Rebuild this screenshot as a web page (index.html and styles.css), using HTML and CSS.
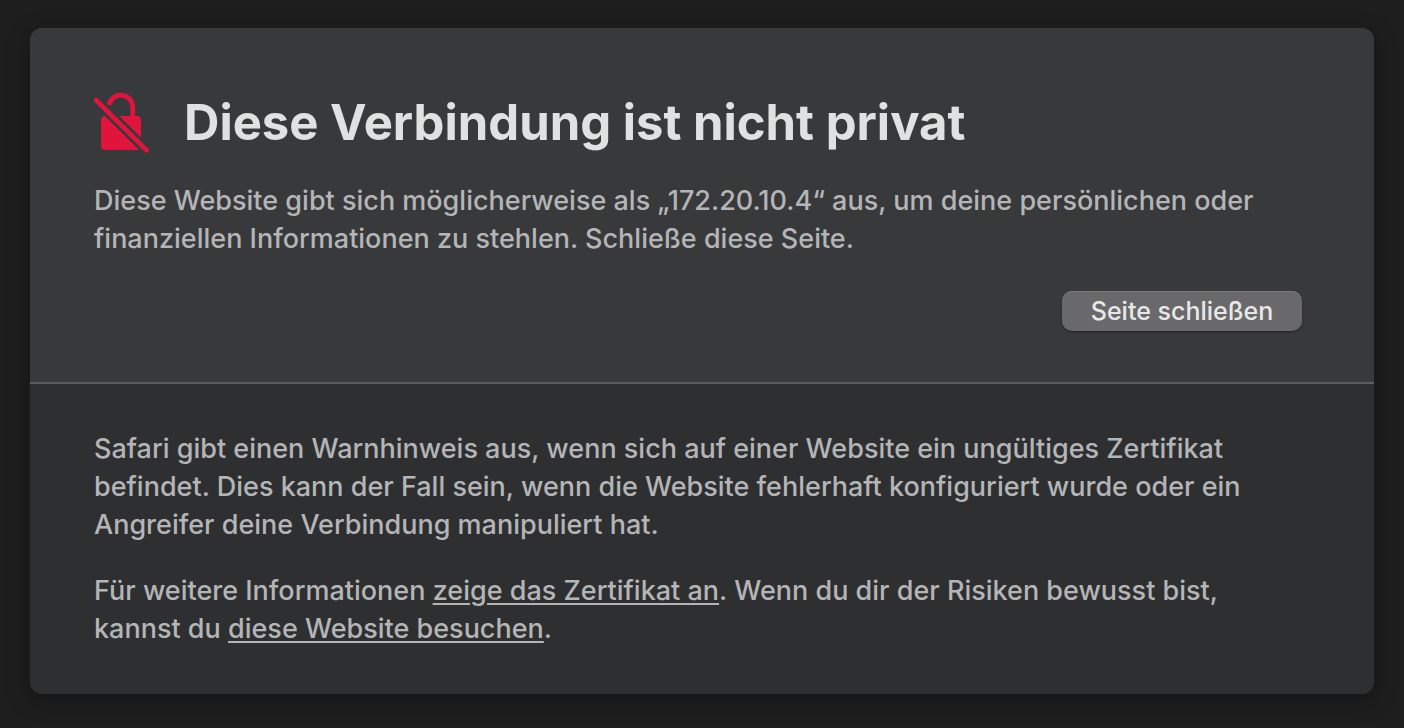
FILE: index.html
```html
<!DOCTYPE html>
<html lang="de">
<head>
<meta charset="utf-8">
<meta name="viewport" content="width=device-width, initial-scale=1">
<title>Diese Verbindung ist nicht privat</title>
<link rel="stylesheet" href="styles.css">
</head>
<body>
<main class="card">
  <section class="warning">
    <header class="heading">
      <svg class="lock" viewBox="0 0 56 62" aria-hidden="true">
        <path class="shackle" d="M14.8 25V15.5a12 12.4 0 0 1 24 0V25"/>
        <rect class="lock-body" x="7" y="24" width="40" height="34" rx="4"/>
        <path class="shackle-cut" d="M11 13H18V24H11Z"/>
        <path class="slash-gap" d="M2 8L57 62.6"/>
        <path class="slash" d="M2 8L52.7 58.3"/>
      </svg>
      <h1>Diese Verbindung ist nicht privat</h1>
    </header>
    <p>Diese Website gibt sich möglicherweise als „172.20.10.4“ aus, um deine persönlichen oder finanziellen Informationen zu stehlen. Schließe diese Seite.</p>
    <div class="actions"><button type="button">Seite schließen</button></div>
  </section>
  <section class="details">
    <p>Safari gibt einen Warnhinweis aus, wenn sich auf einer Website ein ungültiges Zertifikat befindet. Dies kann der Fall sein, wenn die Website fehlerhaft konfiguriert wurde oder ein Angreifer deine Verbindung manipuliert hat.</p>
    <p>Für weitere Informationen <a href="#">zeige das Zertifikat an</a>. Wenn du dir der Risiken bewusst bist, kannst du <a href="#">diese Website besuchen</a>.</p>
  </section>
</main>
</body>
</html>
```
FILE: styles.css
```css
* { box-sizing: border-box; }
body {
  margin: 0;
  padding: 28px 30px 34px;
  background: #1e1e1e;
  color: #b4b5b7;
  font: 500 27px/38px Inter, "Noto Sans", sans-serif;
}
.card {
  overflow: hidden;
  border-radius: 12px;
  background: #2e2f31;
  box-shadow: 0 6px 24px rgba(0, 0, 0, 0.3);
}
.warning {
  padding: 61px 72px 51px 64px;
  background: #38393b;
  border-bottom: 2px solid #5c5d5f;
}
.heading { display: flex; align-items: center; gap: 34px; margin-bottom: 25px; }
.lock { width: 56px; height: 62px; flex: none; }
.shackle { fill: none; stroke: #e0143c; stroke-width: 4.8; }
.lock-body { fill: #e0143c; }
.slash-gap { stroke: #38393b; stroke-width: 10; }
.shackle-cut { fill: #38393b; }
.slash { stroke: #e0143c; stroke-width: 4.6; stroke-linecap: round; }
h1 { margin: 0; color: #e0e1e1; font-size: 49px; line-height: 68px; font-weight: 700; }
p { margin: 0; }
.actions { display: flex; justify-content: flex-end; margin-top: 33px; }
button {
  width: 240px;
  height: 40px;
  padding: 0;
  border: 0;
  border-radius: 10px;
  background: #69696b;
  color: #e8e8e8;
  font: 500 25px/38px Inter, sans-serif;
  box-shadow: inset 0 1px #7c7c7e, 0 1px 2px rgba(0, 0, 0, 0.4);
}
.details { padding: 46px 128px 46px 64px; }
.details p + p { margin-top: 28px; }
a { color: inherit; text-decoration-thickness: 2px; text-underline-offset: 3px; }
```
